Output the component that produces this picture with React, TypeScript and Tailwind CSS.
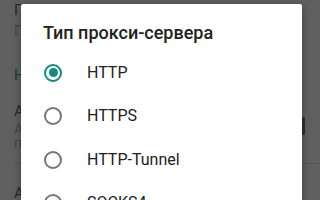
import React from "react";

const options = ["HTTP", "HTTPS", "HTTP-Tunnel", "SOCKS4"];

function Radio({ checked }: { checked: boolean }) {
  return checked ? (
    <div className="w-[18px] h-[18px] rounded-full border-2 border-[#138a7e] flex items-center justify-center shrink-0">
      <div className="w-[9px] h-[9px] rounded-full bg-[#138a7e]" />
    </div>
  ) : (
    <div className="w-[18px] h-[18px] rounded-full border-2 border-[#767676] shrink-0" />
  );
}

export default function App() {
  return (
    <div
      className="relative w-[320px] h-[200px] overflow-hidden bg-[#606060]"
      style={{ fontFamily: "Roboto, 'Noto Sans', sans-serif" }}
    >
      {/* background settings list (dimmed) */}
      <div className="flex flex-col pl-[14px]">
        <div className="h-[20px] pt-[1px] text-[15px] leading-[18px] text-[#2a2a2a]">Прокси</div>
        <div className="h-[46px] pt-[2px] text-[14px] leading-[18px] text-[#474747]">Подключение</div>
        <div className="h-[36px] text-[14px] leading-[18px] font-medium text-[#1a443f]">Настройки</div>
        <div className="h-[18px] text-[15px] leading-[18px] text-[#2a2a2a]">Адрес</div>
        <div className="h-[14px] text-[14px] leading-[18px] text-[#474747]">Адрес сервера</div>
        <div className="h-[29px] text-[14px] leading-[18px] text-[#474747]">прокси</div>
        <div className="h-[1px] bg-[#555555]" />
        <div className="h-[20px]" />
        <div className="text-[15px] leading-[18px] text-[#2a2a2a]">Авторизация</div>
      </div>

      {/* scrollbar thumb */}
      <div className="absolute left-[302px] top-[117px] w-[3px] h-[18px] rounded-full bg-[#2e2e2e]" />

      {/* dialog */}
      <div className="absolute left-[21px] top-[4px] w-[281px] h-[230px] bg-white shadow-[0_2px_8px_rgba(0,0,0,0.35)] rounded-[2px]">
        <div className="pt-[16px] pl-[22px] text-[18px] leading-[25px] font-medium text-[#212121]">
          Тип прокси-сервера
        </div>
        <div className="mt-[6px] flex flex-col">
          {options.map((o, i) => (
            <div key={o} className="h-[43.5px] flex items-center pl-[23px] gap-[25px]">
              <Radio checked={i === 0} />
              <span className="text-[16px] text-[#212121]">{o}</span>
            </div>
          ))}
        </div>
      </div>
    </div>
  );
}
